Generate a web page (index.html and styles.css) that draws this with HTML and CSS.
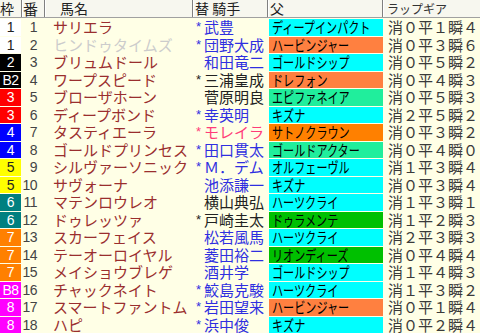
FILE: index.html
```html
<!DOCTYPE html>
<html lang="ja">
<head>
<meta charset="utf-8">
<link rel="stylesheet" href="styles.css">
</head>
<body>
<div class="table">
  <div class="head">
    <div class="h h-waku">枠</div>
    <div class="h h-ban">番</div>
    <div class="h h-name">馬名</div>
    <div class="h h-jockey">替 騎手</div>
    <div class="h h-sire">父</div>
    <div class="h h-lap">ラップギア</div>
  </div>

  <div class="row"><div class="waku w1">1</div><div class="num">1</div><div class="name">サリエラ</div><div class="jockey blue"><span class="mark">*</span>武豊</div><div class="sire cyan"><span>ディープインパクト</span></div><div class="lap">消０平１瞬４</div></div>
  <div class="row"><div class="waku w1">1</div><div class="num">2</div><div class="name off">ヒンドゥタイムズ</div><div class="jockey blue"><span class="mark">*</span>団野大成</div><div class="sire orange"><span>ハービンジャー</span></div><div class="lap">消０平３瞬６</div></div>
  <div class="row"><div class="waku w2">2</div><div class="num">3</div><div class="name">ブリュムドール</div><div class="jockey blue"><span class="mark"></span>和田竜二</div><div class="sire cyan"><span>ゴールドシップ</span></div><div class="lap">消０平５瞬２</div></div>
  <div class="row"><div class="waku w2">B2</div><div class="num">4</div><div class="name">ワープスピード</div><div class="jockey black"><span class="mark">*</span>三浦皇成</div><div class="sire orange"><span>ドレフォン</span></div><div class="lap">消０平４瞬３</div></div>
  <div class="row"><div class="waku w3">3</div><div class="num">5</div><div class="name">ブローザホーン</div><div class="jockey black"><span class="mark"></span>菅原明良</div><div class="sire mint"><span>エピファネイア</span></div><div class="lap">消０平５瞬３</div></div>
  <div class="row"><div class="waku w3">3</div><div class="num">6</div><div class="name">ディープボンド</div><div class="jockey blue"><span class="mark">*</span>幸英明</div><div class="sire cyan"><span>キズナ</span></div><div class="lap">消２平５瞬２</div></div>
  <div class="row"><div class="waku w4">4</div><div class="num">7</div><div class="name">タスティエーラ</div><div class="jockey pink"><span class="mark">*</span>モレイラ</div><div class="sire dorange"><span>サトノクラウン</span></div><div class="lap">消０平３瞬２</div></div>
  <div class="row"><div class="waku w4">4</div><div class="num">8</div><div class="name">ゴールドプリンセス</div><div class="jockey blue"><span class="mark">*</span>田口貫太</div><div class="sire mint"><span>ゴールドアクター</span></div><div class="lap">消０平４瞬０</div></div>
  <div class="row"><div class="waku w5">5</div><div class="num">9</div><div class="name">シルヴァーソニック</div><div class="jockey blue"><span class="mark">*</span>Ｍ．デム</div><div class="sire cyan"><span>オルフェーヴル</span></div><div class="lap">消１平３瞬４</div></div>
  <div class="row"><div class="waku w5">5</div><div class="num">10</div><div class="name">サヴォーナ</div><div class="jockey blue"><span class="mark"></span>池添謙一</div><div class="sire cyan"><span>キズナ</span></div><div class="lap">消０平３瞬４</div></div>
  <div class="row"><div class="waku w6">6</div><div class="num">11</div><div class="name">マテンロウレオ</div><div class="jockey black"><span class="mark"></span>横山典弘</div><div class="sire cyan"><span>ハーツクライ</span></div><div class="lap">消１平３瞬１</div></div>
  <div class="row"><div class="waku w6">6</div><div class="num">12</div><div class="name">ドゥレッツァ</div><div class="jockey black"><span class="mark">*</span>戸崎圭太</div><div class="sire green"><span>ドゥラメンテ</span></div><div class="lap">消１平２瞬３</div></div>
  <div class="row"><div class="waku w7">7</div><div class="num">13</div><div class="name">スカーフェイス</div><div class="jockey blue"><span class="mark"></span>松若風馬</div><div class="sire cyan"><span>ハーツクライ</span></div><div class="lap">消２平３瞬３</div></div>
  <div class="row"><div class="waku w7">7</div><div class="num">14</div><div class="name">テーオーロイヤル</div><div class="jockey blue"><span class="mark"></span>菱田裕二</div><div class="sire green"><span>リオンディーズ</span></div><div class="lap">消０平４瞬４</div></div>
  <div class="row"><div class="waku w7">7</div><div class="num">15</div><div class="name">メイショウブレゲ</div><div class="jockey blue"><span class="mark"></span>酒井学</div><div class="sire cyan"><span>ゴールドシップ</span></div><div class="lap">消１平４瞬３</div></div>
  <div class="row"><div class="waku w8">B8</div><div class="num">16</div><div class="name">チャックネイト</div><div class="jockey blue"><span class="mark">*</span>鮫島克駿</div><div class="sire cyan"><span>ハーツクライ</span></div><div class="lap">消１平３瞬２</div></div>
  <div class="row"><div class="waku w8">8</div><div class="num">17</div><div class="name">スマートファントム</div><div class="jockey blue"><span class="mark">*</span>岩田望来</div><div class="sire orange"><span>ハービンジャー</span></div><div class="lap">消０平１瞬４</div></div>
  <div class="row"><div class="waku w8">8</div><div class="num">18</div><div class="name">ハピ</div><div class="jockey blue"><span class="mark">*</span>浜中俊</div><div class="sire cyan"><span>キズナ</span></div><div class="lap">消０平２瞬４</div></div>
</div>
</body>
</html>
```

FILE: styles.css
```css
html, body {
  margin: 0;
  padding: 0;
  background: #ffffe6;
}
body {
  width: 480px;
  height: 333px;
  overflow: hidden;
  font-family: "Noto Sans CJK JP", "Noto Sans", sans-serif;
}
.table {
  display: flex;
  flex-direction: column;
  width: 480px;
}
.head, .row {
  display: grid;
  grid-template-columns: 22px 23px 148px 75px 115px 97px;
}
.head {
  height: 17px;
  background: #f7f7ef;
  border-bottom: 1px solid #a0a0a0;
}
.h {
  font-size: 14px;
  line-height: 17px;
  color: #222;
  border-right: 1px solid #808080;
  box-shadow: 1px 0 0 #ffffff;
  white-space: nowrap;
}
.h-waku { padding-left: 0; }
.h-ban { padding-left: 1px; font-size: 15px; }
.h-name { padding-left: 15px; }
.h-jockey { padding-left: 2px; }
.h-sire { padding-left: 2px; }
.h-lap {
  border-right: none;
  box-shadow: none;
  padding-left: 4px;
  font-size: 12px;
  color: #333;
}
.row {
  height: 17.5px;
  line-height: 16px;
  font-size: 15px;
  white-space: nowrap;
}
.waku {
  margin-top: 1px;
  width: 21px;
  text-align: center;
  font-family: "Liberation Sans", sans-serif;
  font-size: 14px;
  color: #fff;
  letter-spacing: -0.5px;
}
.w1 { background: #ffffff; color: #222; }
.w2 { background: #000000; }
.w3 { background: #ff0000; }
.w4 { background: #0000ff; }
.w5 { background: #ffff00; color: #222; }
.w6 { background: #008080; }
.w7 { background: #ff8000; }
.w8 { background: #ff00ff; }
.num {
  margin-top: 1px;
  text-align: right;
  padding-right: 8px;
  font-family: "Liberation Sans", sans-serif;
  font-size: 14px;
  color: #444;
  letter-spacing: -0.5px;
}
.name {
  margin-top: 1px;
  padding-left: 8px;
  color: #9a2e2e;
}
.name.off { color: #cccccc; }
.jockey {
  margin-top: 1px;
  display: flex;
  padding-left: 3px;
}
.mark {
  width: 8px;
  flex: none;
  font-family: "Liberation Sans", sans-serif;
  font-size: 13px;
}
.blue { color: #2f2fe0; }
.black { color: #222; }
.pink { color: #ff3c78; }
.sire {
  margin-top: 1px;
  margin-left: 1px;
  color: #000;
  overflow: hidden;
  padding-left: 3px;
}
.sire span {
  display: inline-block;
  transform: scaleX(0.74);
  transform-origin: left center;
}
.cyan { background: #00ffff; }
.orange { background: #ff8040; }
.dorange { background: #ff8000; }
.mint { background: #20ee9c; }
.green { background: #00c000; }
.lap {
  margin-top: 1px;
  padding-left: 5px;
  color: #3a3a3a;
}
```
